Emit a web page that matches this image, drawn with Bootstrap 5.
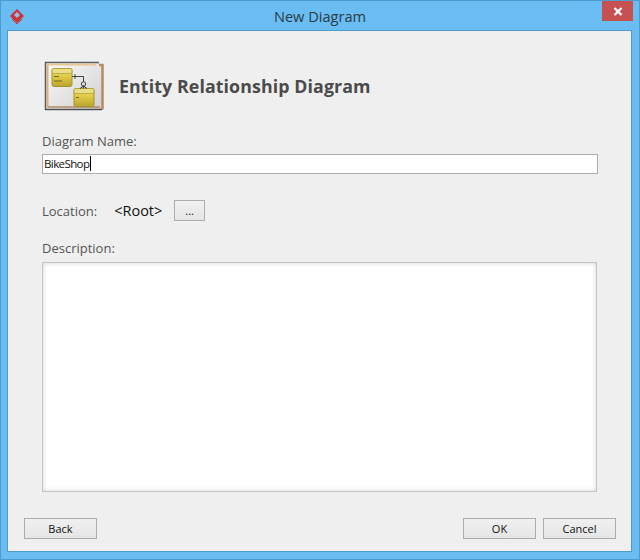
<!DOCTYPE html>
<html lang="en">
<head>
<meta charset="utf-8">
<title>New Diagram</title>
<link href="https://cdn.jsdelivr.net/npm/bootstrap@5.3.0/dist/css/bootstrap.min.css" rel="stylesheet">
<style>
html,body{width:640px;height:560px;margin:0;overflow:hidden;background:#69bdf2;font-family:"Open Sans","Liberation Sans",sans-serif;}
.win{width:640px;height:560px;border:1px solid #4f9ccc;background:#69bdf2;}
.tbar{height:29px;display:grid;grid-template-columns:1fr auto 1fr;}
.ttl{font-size:14.6px;line-height:30px;color:#2b3a44;}
.xend{padding-right:6px;}
.xbtn{width:31px;height:20px;background:#c75050;}
.pane{width:625px;height:522px;margin-left:6px;background:#efefef;border:1px solid #4f9ccc;padding:29px 0 0 34px;}
.hd{height:52px;gap:15px;margin-left:2px;}
.hd-t{font-size:17.8px;font-weight:700;color:#4b4b4b;letter-spacing:.1px;margin:2px 0 0;}
.lbl{font-size:13px;line-height:18px;color:#555;}
.nm{margin-top:20px;}
.ds{margin-top:18px;}
.ipt{display:block;width:556px;height:20px;margin-top:4px;border:1px solid #abadb3;border-radius:0;background:#fff;padding:0 1px;font-size:11.5px;letter-spacing:-.6px;line-height:18px;color:#111;}
.caret{display:inline-block;width:1px;height:15px;background:#000;vertical-align:-3px;margin-left:1px;}
.locrow{height:21px;margin-top:26px;}
.rootv{font-size:14.5px;color:#111;margin-left:17px;width:60px;}
.wbtn{border:1px solid #adadad;border-radius:0;background:linear-gradient(#f0f0f0,#e5e5e5);color:#111;font-size:11px;padding:0;height:21px;line-height:18px;}
.dots{width:31px;}
.tarea{width:555px;height:230px;margin-top:5px;background:#fff;border:1px solid #c4c4c4;box-shadow:inset 0 0 5px #d5d5d5;}
.acts{width:592px;margin:26px 0 0 -18px;}
.act{width:73px;}
.cnl{margin-left:7px;}
</style>
</head>
<body>
<div class="win">
  <div class="tbar">
    <div class="d-flex align-items-center ps-2">
      <svg width="16" height="18" viewBox="0 0 16 18"><path d="M8 2 15 9 8 16 1 9Z" fill="#cf3236"/><path d="M8 5 11 8 8 11 5 8Z" fill="#8fc3e4"/><path d="M3 12 8 17 13 12" fill="none" stroke="#cf3236"/></svg>
    </div>
    <div class="ttl text-center">New Diagram</div>
    <div class="d-flex justify-content-end xend">
      <div class="xbtn d-flex align-items-center justify-content-center">
        <svg width="10" height="9" viewBox="0 0 10 9"><path d="M1.500 1 8.500 8M8.500 1 1.500 8" stroke="#fff" stroke-width="2.200"/></svg>
      </div>
    </div>
  </div>
  <div class="pane">
    <div class="hd d-flex align-items-center">
      <svg width="60" height="50" viewBox="0 0 60 50">
        <defs>
          <linearGradient id="yl" x1="0" y1="0" x2="0" y2="1"><stop offset="0" stop-color="#f0e27a"/><stop offset=".5" stop-color="#dcc63f"/><stop offset="1" stop-color="#b9a534"/></linearGradient>
          <linearGradient id="bgd" x1="0" y1="0" x2="1" y2="1"><stop offset="0" stop-color="#fbfbfb"/><stop offset="1" stop-color="#cfcfcf"/></linearGradient>
        </defs>
        <path d="M1 1H55V4H59V49H1Z" fill="url(#bgd)"/>
        <path d="M1.500 49V1.500H55" fill="none" stroke="#555b66" stroke-width="1.500"/>
        <path d="M55 4H58.500V48.500" fill="none" stroke="#b98a5e" stroke-width="2.500"/>
        <path d="M1 48.500H58" stroke="#4d4f55" stroke-width="1.500"/>
        <path d="M3.500 3.500H52" stroke="#e7c690" stroke-width="2"/>
        <path d="M3.500 3.500V46" stroke="#dcb27c" stroke-width="2"/>
        <path d="M3.500 46H56" stroke="#b68a60" stroke-width="1.500"/>
        <rect x="8" y="7.500" width="20" height="18" rx="2" fill="url(#yl)" stroke="#a59227"/>
        <rect x="8" y="7.500" width="20" height="5" rx="1.500" fill="#e9dd85" stroke="#a59227" stroke-width=".6"/>
        <path d="M10 15.500H15M10 20H18" stroke="#6f6420"/>
        <rect x="30" y="27.500" width="20" height="18" rx="2" fill="url(#yl)" stroke="#a59227"/>
        <rect x="30" y="27.500" width="20" height="5" rx="1.500" fill="#e9dd85" stroke="#a59227" stroke-width=".6"/>
        <path d="M32 36.500H35" stroke="#6f6420"/>
        <path d="M28 15.500H39.500V21" fill="none" stroke="#444"/>
        <path d="M31 13V18" stroke="#444"/>
        <circle cx="39.500" cy="23" r="2.200" fill="#dde" stroke="#444"/>
        <path d="M39.500 25V27.500M36 27.500 39.500 25 43 27.500" fill="none" stroke="#333"/>
      </svg>
      <h1 class="hd-t">Entity Relationship Diagram</h1>
    </div>
    <div class="lbl nm">Diagram Name:</div>
    <div class="ipt">BikeShop<span class="caret"></span></div>
    <div class="locrow d-flex align-items-center">
      <span class="lbl">Location:</span>
      <span class="rootv">&lt;Root&gt;</span>
      <button type="button" class="btn wbtn dots">...</button>
    </div>
    <div class="lbl ds">Description:</div>
    <div class="tarea"></div>
    <div class="acts d-flex">
      <button type="button" class="btn wbtn act">Back</button>
      <button type="button" class="btn wbtn act ms-auto">OK</button>
      <button type="button" class="btn wbtn act cnl">Cancel</button>
    </div>
  </div>
</div>
</body>
</html>
